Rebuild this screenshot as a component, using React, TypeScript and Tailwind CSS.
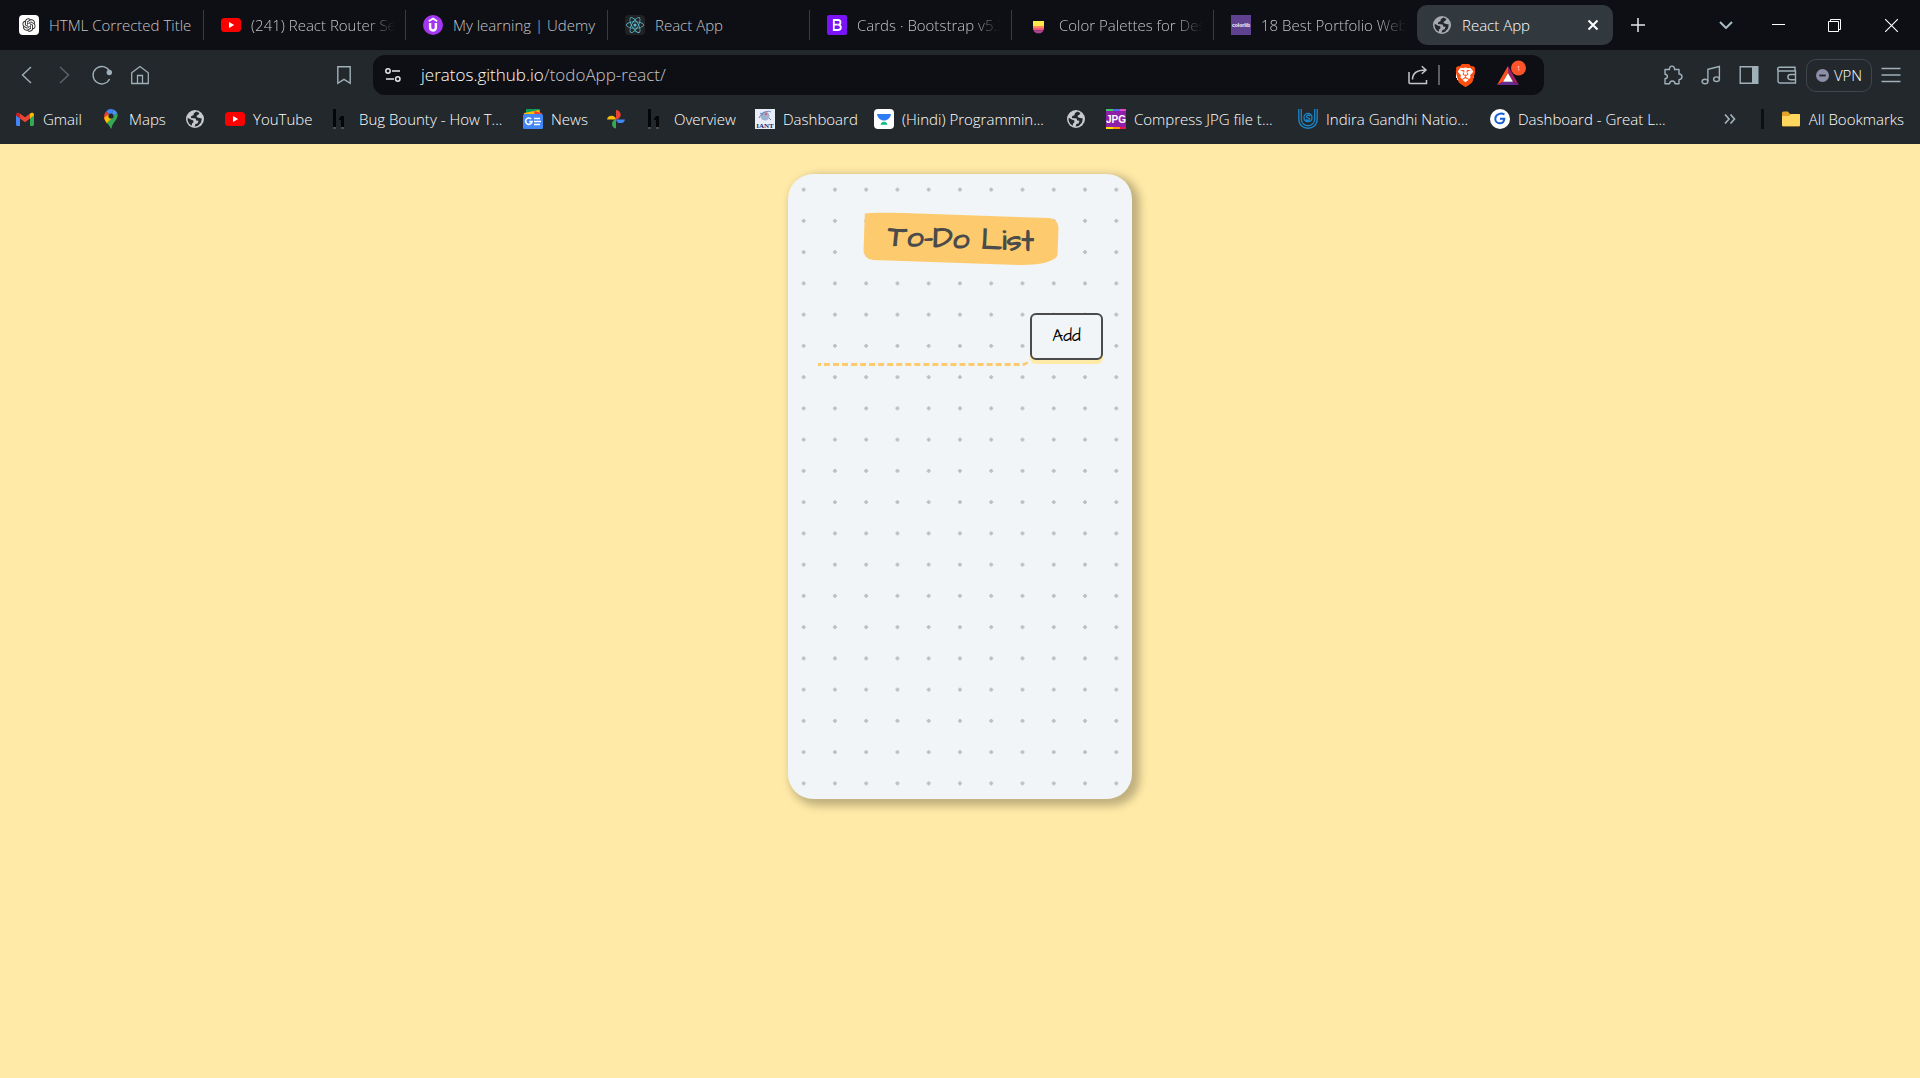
import type { ReactNode } from "react";
import { FaReact } from "react-icons/fa";
import { SiBrave } from "react-icons/si";
import { RiOpenaiFill } from "react-icons/ri";

function YouTubeIcon() {
  return (
    <svg viewBox="0 0 20 20" className="size-5">
      <rect y="3" width="20" height="14" rx="3.5" fill="#ff0000" />
      <path d="M8 7v6l5.2-3z" fill="#fff" />
    </svg>
  );
}

function GlobeIcon({ color }: { color: string }) {
  return (
    <svg viewBox="0 0 20 20" className="size-5">
      <circle cx="10" cy="10" r="9" fill={color} />
      <path
        d="M11.5 2.4 8.8 4.2 8.6 6 6.2 7.2 5.8 9 8 9.2 10.6 9.4 11.2 11.4 13.4 11.8 12.8 14.2 10.4 15 9.6 17.4A7.4 7.4 0 0 0 13 16.7L16 13.6 16.8 9.6 14.6 9 12.4 8.6 11.4 7 13.6 5.6 14.4 4.1Z"
        fill="#23282c"
      />
      <path d="M2.7 8.8 5.8 10.6 8.4 11.4 8.4 13.4 7 14.6 6.8 16.7A7.4 7.4 0 0 1 2.7 8.8Z" fill="#23282c" />
    </svg>
  );
}

function OpenAiTabIcon() {
  return (
    <span className="flex size-5 items-center justify-center rounded-sm bg-white">
      <RiOpenaiFill className="size-4 text-[#222]" />
    </span>
  );
}

function UdemyIcon() {
  return (
    <svg viewBox="0 0 20 20" className="size-5">
      <circle cx="10" cy="10" r="10" fill="#a435f0" />
      <path d="M5.8 6.2 10 3.6l4.2 2.6" fill="none" stroke="#fff" strokeWidth="1.8" />
      <path d="M7.1 8v4.6c0 3.8 5.8 3.8 5.8 0V8" fill="none" stroke="#fff" strokeWidth="2.4" />
    </svg>
  );
}

function ReactTabIcon() {
  return (
    <span className="flex size-5 items-center justify-center rounded-sm bg-[#222]">
      <FaReact className="size-[18px] text-[#58b8cf]" />
    </span>
  );
}

function BootstrapTabIcon() {
  return (
    <svg viewBox="0 0 20 20" className="size-5">
      <rect width="20" height="20" rx="2" fill="#7a13f8" />
      <path
        d="M6.8 5h4.1c3.4 0 3.4 4.3.4 4.8 3.6.4 3.3 5.2-.6 5.2H6.8zM6.8 9.7h4"
        fill="none"
        stroke="#fff"
        strokeWidth="1.8"
      />
    </svg>
  );
}

function PaletteIcon() {
  return (
    <svg viewBox="0 0 20 20" className="size-5">
      <path d="M4 6h11v5H4z" fill="#ffe94a" />
      <path d="M4 11h11v2H4z" fill="#ff8a5c" />
      <path d="M4 13h11a5 4 0 0 1-.6 2.400H4.600A5 4 0 0 1 4 13z" fill="#f2587a" />
      <path d="M4.600 15.400h9.800a5 3.500 0 0 1-9.800 0z" fill="#b0449a" />
    </svg>
  );
}

function ColorlibIcon() {
  return (
    <svg viewBox="0 0 20 20" className="size-5">
      <rect width="20" height="20" fill="#5f4190" />
      <text x="10" y="12" textAnchor="middle" fontFamily="Liberation Sans" fontWeight="700" fontSize="5" fill="#fff">
        colorlib
      </text>
    </svg>
  );
}

function GmailIcon() {
  return (
    <svg viewBox="0 0 20 20" className="size-5">
      <path d="M1 6.2v9.300c0 .8.6 1.500 1.500 1.500H5V9z" fill="#4285f4" />
      <path d="M19 6.200v9.300c0 .8-.6 1.500-1.500 1.500H15V9z" fill="#34a853" />
      <path d="M5 4.500v5l5 3.800 5-3.800v-5l-5 3.800z" fill="#ea4335" />
      <path d="M1 5.500v1L5 9.500v-5c-1.500-1.500-4-1-4 1z" fill="#c5221f" />
      <path d="M19 5.500v1l-4 3v-5c1.500-1.500 4-1 4 1z" fill="#fbbc04" />
    </svg>
  );
}

function MapsIcon() {
  return (
    <svg viewBox="0 0 20 20" className="size-5">
      <path d="M5 2.500A7 7 0 0 1 12.300.500L10 7z" fill="#4285f4" />
      <path d="M12.300.500a7 7 0 0 1 3.900 3.200L8 13 10 7z" fill="#4a90f5" />
      <path d="M5 2.500 10 7l-5.600 5C2.400 9 2.600 5.200 5 2.500z" fill="#ea4335" />
      <path d="M3.300 8.500 8 5.500l4 3-6 6c-1.500-2-2.700-4-2.700-6z" fill="#fbbc04" />
      <path d="M16.200 3.700c2.400 5.800-4.700 8.800-5.600 15.300-.2.700-1 .7-1.200 0-.6-2-1.800-3.300-3.400-5z" fill="#34a853" />
      <circle cx="10" cy="7" r="2.600" fill="#23282c" />
    </svg>
  );
}

function HackerIcon() {
  return (
    <svg viewBox="0 0 20 20" className="size-5">
      <path d="M2 0h3v18H2zM8 10l2-3h3v11h-3v-7H8z" fill="#050607" />
      <path d="M2 19h3M10 19h3" stroke="#777" />
    </svg>
  );
}

function NewsIcon() {
  return (
    <svg viewBox="0 0 20 20" className="size-5">
      <path d="M3 0h14v6H3z" fill="#0f9d58" />
      <path d="m1 4 15-3 2 5H1z" fill="#fbbc04" />
      <path d="m11 2 8 2v3h-7z" fill="#ea4335" />
      <rect y="5" width="20" height="15" rx="1.500" fill="#4285f4" />
      <path d="M8.200 10a3.200 3.200 0 1 0 .8 2.600H6.200M11 9.500h6M11 12.500h7M11 15.500h6" fill="none" stroke="#fff" strokeWidth="1.600" />
    </svg>
  );
}

function PhotosIcon() {
  return (
    <svg viewBox="0 0 20 20" className="size-5">
      <path d="M10 1a4.700 4.700 0 0 1 0 9.400z" fill="#ea4335" />
      <path d="M19 10.400a4.600 4.600 0 0 1-9 0z" fill="#4285f4" />
      <path d="M10 19.500a4.600 4.600 0 0 1 0-9.100z" fill="#34a853" />
      <path d="M1 10.400a4.600 4.600 0 0 1 9 0z" fill="#fbbc04" />
    </svg>
  );
}

function IantIcon() {
  return (
    <svg viewBox="0 0 20 20" className="size-5">
      <rect width="20" height="20" fill="#e9edf6" />
      <circle cx="10" cy="7" r="4.500" fill="#9fb0d0" />
      <path d="M4 9c3-6 9-8 12-6M5 4l3 2M14 9l2 2" fill="none" stroke="#6a84ba" />
      <circle cx="11" cy="5" r="1.200" fill="#d06a6a" />
      <text x="10" y="19" textAnchor="middle" fontFamily="Liberation Serif" fontWeight="700" fontSize="7" fill="#1b2470">
        IANT
      </text>
    </svg>
  );
}

function UnacademyIcon() {
  return (
    <svg viewBox="0 0 20 20" className="size-5">
      <rect width="20" height="20" rx="4" fill="#fff" />
      <path d="M3 5h14c-.6 4-3.500 6.500-7 6.500S3.600 9 3 5z" fill="#2f7df6" />
      <path d="M6.500 15.800c.8-4 6.200-4 7 0z" fill="#08bd80" />
    </svg>
  );
}

function JpgIcon() {
  return (
    <svg viewBox="0 0 20 20" className="size-5">
      <rect width="20" height="20" fill="#8e1fa8" />
      <path d="M0 0h7v2H0z" fill="#3fc66b" />
      <path d="M7 0h7v2H7z" fill="#4a6fe8" />
      <path d="M14 0h6v2h-6z" fill="#e04ad0" />
      <path d="M0 18h7v2H0z" fill="#ffe000" />
      <path d="M7 18h7v2H7z" fill="#ff9a00" />
      <path d="M14 18h6v2h-6z" fill="#f01848" />
      <text x="10" y="14" textAnchor="middle" fontFamily="Liberation Sans" fontWeight="700" fontSize="10" fill="#fff">
        JPG
      </text>
    </svg>
  );
}

function IgnouIcon() {
  return (
    <svg viewBox="0 0 20 20" className="size-5" fill="none" stroke="#1c86c7" strokeWidth="1.3">
      <path d="M.8 0V10C.8 22.300 19.200 22.300 19.200 10V0M3.300 0V10C3.300 19 16.700 19 16.700 10V0" />
      <path d="M14 8.500C14 3 6 3 6 8.500S14 14 14 8.500M12 7c-1.500-1.500-4-.5-3.500 1 .4 1 3.500.6 3.200 2.200-.4 1.500-3 1.300-3.700.2" />
    </svg>
  );
}

function GreatLearningIcon() {
  return (
    <svg viewBox="0 0 20 20" className="size-5">
      <circle cx="10" cy="10" r="10" fill="#fff" />
      <path d="M14.500 5.500C11 3.500 5.300 5 5.300 10c0 5.300 8.400 6.300 9-.2H10" fill="none" stroke="#1a5fd8" strokeWidth="2" />
    </svg>
  );
}

function FolderIcon() {
  return (
    <svg viewBox="0 0 20 20" className="size-5">
      <path d="M1 4a1.500 1.500 0 0 1 1.500-1.500H7L9 5h9a1 1 0 0 1 1 1v10.500a1 1 0 0 1-1 1H2a1 1 0 0 1-1-1z" fill="#e0a52a" />
      <path d="M1 7h7l2-2h8a1 1 0 0 1 1 1v10a1 1 0 0 1-1 1H2a1 1 0 0 1-1-1z" fill="#ffd75e" />
    </svg>
  );
}

const tabs: { title: string; icon: ReactNode; fade?: boolean }[] = [
  { title: "HTML Corrected Title", icon: <OpenAiTabIcon /> },
  { title: "(241) React Router Set", icon: <YouTubeIcon />, fade: true },
  { title: "My learning | Udemy", icon: <UdemyIcon /> },
  { title: "React App", icon: <ReactTabIcon /> },
  { title: "Cards · Bootstrap v5.3", icon: <BootstrapTabIcon />, fade: true },
  { title: "Color Palettes for Des", icon: <PaletteIcon />, fade: true },
  { title: "18 Best Portfolio Web", icon: <ColorlibIcon />, fade: true },
];

const bookmarks: { label: string; name?: string; icon: ReactNode; width: string }[] = [
  { label: "Gmail", icon: <GmailIcon />, width: "w-[86px]" },
  { label: "Maps", icon: <MapsIcon />, width: "w-[84px]" },
  { label: "", name: "Site", icon: <GlobeIcon color="#c8cacd" />, width: "w-10" },
  { label: "YouTube", icon: <YouTubeIcon />, width: "w-[106px]" },
  { label: "Bug Bounty - How T...", icon: <HackerIcon />, width: "w-[192px]" },
  { label: "News", icon: <NewsIcon />, width: "w-[83px]" },
  { label: "", name: "Photos", icon: <PhotosIcon />, width: "w-10" },
  { label: "Overview", icon: <HackerIcon />, width: "w-[109px]" },
  { label: "Dashboard", icon: <IantIcon />, width: "w-[119px]" },
  { label: "(Hindi) Programmin...", icon: <UnacademyIcon />, width: "w-[192px]" },
  { label: "", name: "Site", icon: <GlobeIcon color="#c8cacd" />, width: "w-10" },
  { label: "Compress JPG file t...", icon: <JpgIcon />, width: "w-[192px]" },
  { label: "Indira Gandhi Natio...", icon: <IgnouIcon />, width: "w-[192px]" },
  { label: "Dashboard - Great L...", icon: <GreatLearningIcon />, width: "w-[192px]" },
];

function TabStrip() {
  return (
    <div className="flex h-[50px] items-center bg-[#0e0f14] pl-[2px] text-[#c4c5c8]">
      {tabs.map((tab, i) => (
        <button
          key={i}
          type="button"
          className={
            i === tabs.length - 1
              ? "flex h-[30px] w-[202px] shrink items-center pr-[10px] pl-[17px] text-left"
              : "flex h-[30px] w-[202px] shrink items-center border-r border-[#3a3b3f] pr-[10px] pl-[17px] text-left"
          }
        >
          <span className="shrink-0">{tab.icon}</span>
          <span
            className={
              tab.fade
                ? "ml-[10px] flex-1 overflow-hidden whitespace-nowrap [mask-image:linear-gradient(to_right,black_80%,transparent)]"
                : "ml-[10px] flex-1 whitespace-nowrap"
            }
          >
            {tab.title}
          </span>
        </button>
      ))}
      <div className="ml-px flex h-10 w-[196px] items-center rounded-[10px] bg-[#31393e] pr-[10px] pl-[15px] text-white">
        <GlobeIcon color="#a7abb0" />
        <span className="ml-[10px] flex-1">React App</span>
        <button type="button" aria-label="Close tab" className="flex size-5 items-center justify-center">
          <svg viewBox="0 0 12 12" className="size-3" stroke="#fff" strokeWidth="2">
            <path d="m1.500 1.500 9 9m0-9-9 9" />
          </svg>
        </button>
      </div>
      <button type="button" aria-label="New tab" className="ml-3 flex size-[26px] items-center justify-center">
        <svg viewBox="0 0 14 14" className="size-[14px]" stroke="#e6e7e9" strokeWidth="1.5">
          <path d="M7 0v14M0 7h14" />
        </svg>
      </button>
      <div className="ml-auto flex items-center">
        <button type="button" aria-label="Search tabs" className="flex h-10 w-12 items-center justify-center">
          <svg viewBox="0 0 14 8" className="h-2 w-[14px]" fill="none" stroke="#a9bcc6" strokeWidth="2">
            <path d="m1 1 6 6 6-6" />
          </svg>
        </button>
        <button type="button" aria-label="Minimize" className="flex h-10 w-14 items-center justify-center">
          <svg viewBox="0 0 13 13" className="size-[13px]" stroke="#fff">
            <path d="M0 5.500h13" />
          </svg>
        </button>
        <button type="button" aria-label="Restore" className="flex h-10 w-14 items-center justify-center">
          <svg viewBox="0 0 13 13" className="size-[13px]" fill="none" stroke="#fff">
            <path d="M.5 2.500h10v10H.5zM2.500 2.500V.5h10v10h-2" />
          </svg>
        </button>
        <button type="button" aria-label="Close window" className="flex h-10 w-[58px] items-center justify-center">
          <svg viewBox="0 0 13 13" className="size-[13px]" stroke="#fff" strokeWidth="1.1">
            <path d="m0 0 13 13m0-13L0 13" />
          </svg>
        </button>
      </div>
    </div>
  );
}

function ToolButton({ label, children }: { label: string; children: ReactNode }) {
  return (
    <button type="button" aria-label={label} className="flex h-10 w-[38px] items-center justify-center">
      <svg viewBox="0 0 20 20" className="size-5" fill="none" stroke="#9fb0b9" strokeWidth="1.4">
        {children}
      </svg>
    </button>
  );
}

function Toolbar() {
  return (
    <div className="flex h-[50px] items-center bg-[#23282c]">
      <div className="flex w-[373px] shrink-0 items-center pr-[10px] pl-[7px]">
        <ToolButton label="Back">
          <path d="m15 2-8.500 8 8.500 8" />
        </ToolButton>
        <ToolButton label="Forward">
          <path d="m6 2 8.500 8L6 18" stroke="#5a656b" />
        </ToolButton>
        <ToolButton label="Reload">
          <path d="M17.500 6.200A8.700 8.700 0 1 0 17.600 14" />
          <circle cx="17.300" cy="7.500" r="2" fill="#9fb0b9" />
        </ToolButton>
        <ToolButton label="Home">
          <path d="M1.700 7.800 10 1.500l8.300 6.300v10.700H1.700zM7.500 18.500v-8h5v8" strokeWidth="1.300" />
        </ToolButton>
        <div className="ml-auto">
          <ToolButton label="Bookmark this page">
            <path d="M3.800 1.700h12.400v16.600L10 14.300l-6.200 4z" />
          </ToolButton>
        </div>
      </div>
      <div className="flex h-10 flex-1 items-center rounded-xl bg-[#0e0f14] pl-3">
        <svg viewBox="0 0 16 16" className="size-4 shrink-0" fill="none" stroke="#e4e6e8" strokeWidth="1.500">
          <circle cx="3" cy="4" r="2.200" />
          <path d="M7 4h8M1 12h8" />
          <circle cx="12.800" cy="12" r="2.200" />
        </svg>
        <div className="ml-5 flex-1 text-[17px] font-light text-[#c4c5c8]">
          <span className="text-white">jeratos.github.io</span>/todoApp-react/
        </div>
        <button type="button" aria-label="Share" className="flex size-10 items-center justify-center">
          <svg viewBox="0 0 20 20" className="size-5" fill="none" stroke="#c4c6c8" strokeWidth="1.500">
            <path d="M1 7v10.500a1 1 0 0 0 1 1h16.500V15M4.500 14.500C4.500 8 9 5 17.500 5M13.800 1.200l4.200 3.800-4.200 3.800" />
          </svg>
        </button>
        <span className="h-5 w-[2px] bg-[#5c5e62]" />
        <button type="button" aria-label="Brave Shields" className="flex h-10 w-[50px] items-center justify-center">
          <span className="flex h-[22px] w-5 items-center justify-center bg-[radial-gradient(circle,white_60%,transparent_61%)]">
            <SiBrave className="size-[23px] shrink-0 text-[#ff4f0f]" />
          </span>
        </button>
        <button type="button" aria-label="Brave Rewards" className="mr-3 flex h-10 w-[42px] items-center justify-center">
          <svg viewBox="0 0 30 30" className="size-[30px]">
            <path d="M12 6 1 25l6-3.200L12 13z" fill="#ff4f1f" />
            <path d="m12 6 11 19-6-3.200L12 13z" fill="#9e1f63" />
            <path d="M1 25h22l-6-3.200H7z" fill="#662d91" />
            <path d="m12 13-5 8.800h10z" fill="#fff" />
            <circle cx="22.500" cy="8" r="7.500" fill="#fb542b" />
            <text x="22.500" y="11" textAnchor="middle" fontFamily="Open Sans" fontSize="8" fill="#fff">
              1
            </text>
          </svg>
        </button>
      </div>
      <div className="flex w-[376px] shrink-0 items-center justify-end pr-[10px]">
        <ToolButton label="Extensions">
          <path d="M2 4.500h4.500c-.8-4.500 5.600-4.500 5 0h4.500V9c4 .2 4 5.500 0 5.700v4h-4c-.4-3.600-5-3.600-5.400 0H2v-5c3.200-.3 3.200-4.200 0-4.500z" strokeLinejoin="round" />
        </ToolButton>
        <ToolButton label="Media controls">
          <ellipse cx="4" cy="16.500" rx="2.900" ry="2.300" />
          <ellipse cx="15.500" cy="14.200" rx="2.900" ry="2.300" />
          <path d="M6.900 16.500V4.200l11.500-2.700v12.700" />
        </ToolButton>
        <ToolButton label="Sidebar">
          <path d="M1.200 1.700h17.600v16.600H1.200z" />
          <path d="M13 2h6v16h-6z" fill="#9fb0b9" stroke="none" />
        </ToolButton>
        <ToolButton label="Wallet">
          <path d="M18 6V2.200H2.500a1.300 1.300 0 0 0 0 3.800h16v12H3a2 2 0 0 1-2-2V4M18.500 9.500h-5a2.600 2.600 0 0 0 0 5.200h5" />
        </ToolButton>
        <button
          type="button"
          className="flex h-[33px] w-[66px] items-center justify-center gap-[5px] rounded-[10px] border border-[#3f474c] text-white"
        >
          <svg viewBox="0 0 14 14" className="size-[13px]">
            <circle cx="7" cy="7" r="7" fill="#8d8ea8" />
            <path d="M3.500 7h7" stroke="#23282c" strokeWidth="2" />
          </svg>
          VPN
        </button>
        <ToolButton label="Menu">
          <path d="M.500 3.500h19M.500 10h19M.500 16.500h19" />
        </ToolButton>
      </div>
    </div>
  );
}

function BookmarksBar() {
  return (
    <nav className="flex h-11 items-center bg-[#23282c] pb-[6px] pl-[15px] text-white">
      {bookmarks.map((item, i) => (
        <a
          key={i}
          href="#"
          aria-label={item.label || item.name}
          className={`flex shrink-0 items-center gap-2 whitespace-nowrap ${item.width}`}
        >
          <span className="shrink-0">{item.icon}</span>
          {item.label}
        </a>
      ))}
      <button type="button" aria-label="More bookmarks" className="ml-auto flex h-6 w-[30px] items-center justify-center">
        <svg viewBox="0 0 12 10" className="h-[10px] w-3" fill="none" stroke="#9fb0b9" strokeWidth="1.700">
          <path d="m1 .500 4 4.500-4 4.500M6.500.500l4 4.500-4 4.500" />
        </svg>
      </button>
      <span className="ml-4 h-5 w-[3px] bg-[#0e0f14]" />
      <a href="#" className="mr-4 ml-[17px] flex items-center gap-2 whitespace-nowrap">
        <FolderIcon />
        All Bookmarks
      </a>
    </nav>
  );
}

function TodoCard() {
  return (
    <section className="mt-[30px] min-h-[625px] w-[344px] rounded-[25px] bg-[#f1f5f8] bg-[radial-gradient(circle,#bfc0c1_2px,transparent_2px)] bg-[length:9.09%_5%] pt-[41px] pr-[29px] pl-[30px] font-['Architects_Daughter',cursive] shadow-[5px_4px_9px_3px_#00000040]">
      <h1 className="mx-auto flex h-12 w-[194px] rotate-2 items-center justify-center rounded-[20%_5%_20%_5%/5%_20%_25%_20%] bg-[#fdcb6e] text-[30px] font-bold whitespace-nowrap text-[#4b4b4b]">
        To-Do List
      </h1>
      <form className="mt-[50px] flex items-start" onSubmit={(e) => e.preventDefault()}>
        <input
          type="text"
          aria-label="New task"
          className="h-[53px] min-w-0 flex-1 rounded-br-lg border-b-[3px] border-dashed border-[#fdcb6e] bg-transparent px-1 text-[#4b4b4b] outline-none"
        />
        <button
          type="submit"
          className="h-[47px] w-[73px] rounded-md border-2 border-[#4b4b4b] bg-[#f1f5f8] text-[17px] text-black shadow-[0_4px_0_#ffeaa7]"
        >
          Add
        </button>
      </form>
    </section>
  );
}

export default function App() {
  return (
    <div className="flex min-h-screen flex-col bg-[#ffeaa7] font-['Open_Sans','Noto_Sans',sans-serif] text-[15px] font-light">
      <header>
        <TabStrip />
        <Toolbar />
        <BookmarksBar />
      </header>
      <main className="flex flex-1 items-start justify-center">
        <TodoCard />
      </main>
    </div>
  );
}
